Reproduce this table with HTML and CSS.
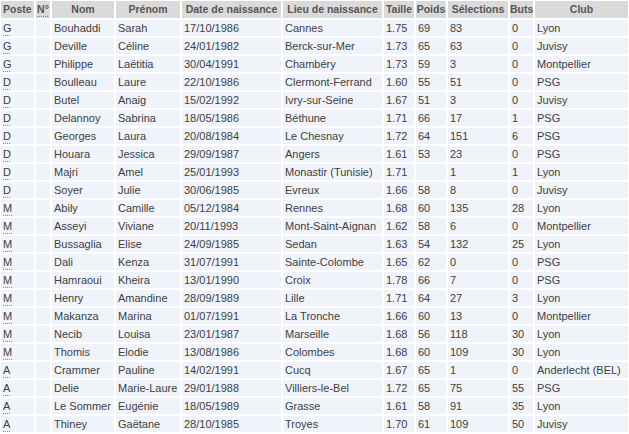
FILE: index.html
```html
<!DOCTYPE html>
<html lang="fr">
<head>
<meta charset="utf-8">
<title>Équipe de France</title>
<link rel="stylesheet" href="styles.css">
</head>
<body>
<table class="squad">
<colgroup>
<col class="c-poste"><col class="c-num"><col class="c-nom"><col class="c-prenom"><col class="c-date"><col class="c-lieu"><col class="c-taille"><col class="c-poids"><col class="c-sel"><col class="c-buts"><col class="c-club">
</colgroup>
<thead>
<tr><th>Poste</th><th><abbr title="Numéro">N°</abbr></th><th>Nom</th><th>Prénom</th><th>Date de naissance</th><th>Lieu de naissance</th><th>Taille</th><th>Poids</th><th>Sélections</th><th>Buts</th><th>Club</th></tr>
</thead>
<tbody>
<tr><td><abbr title="Gardienne">G</abbr></td><td></td><td>Bouhaddi</td><td>Sarah</td><td>17/10/1986</td><td>Cannes</td><td>1.75</td><td>69</td><td>83</td><td>0</td><td>Lyon</td></tr>
<tr><td><abbr title="Gardienne">G</abbr></td><td></td><td>Deville</td><td>Céline</td><td>24/01/1982</td><td>Berck-sur-Mer</td><td>1.73</td><td>65</td><td>63</td><td>0</td><td>Juvisy</td></tr>
<tr><td><abbr title="Gardienne">G</abbr></td><td></td><td>Philippe</td><td>Laëtitia</td><td>30/04/1991</td><td>Chambéry</td><td>1.73</td><td>59</td><td>3</td><td>0</td><td>Montpellier</td></tr>
<tr><td><abbr title="Défenseure">D</abbr></td><td></td><td>Boulleau</td><td>Laure</td><td>22/10/1986</td><td>Clermont-Ferrand</td><td>1.60</td><td>55</td><td>51</td><td>0</td><td>PSG</td></tr>
<tr><td><abbr title="Défenseure">D</abbr></td><td></td><td>Butel</td><td>Anaig</td><td>15/02/1992</td><td>Ivry-sur-Seine</td><td>1.67</td><td>51</td><td>3</td><td>0</td><td>Juvisy</td></tr>
<tr><td><abbr title="Défenseure">D</abbr></td><td></td><td>Delannoy</td><td>Sabrina</td><td>18/05/1986</td><td>Béthune</td><td>1.71</td><td>66</td><td>17</td><td>1</td><td>PSG</td></tr>
<tr><td><abbr title="Défenseure">D</abbr></td><td></td><td>Georges</td><td>Laura</td><td>20/08/1984</td><td>Le Chesnay</td><td>1.72</td><td>64</td><td>151</td><td>6</td><td>PSG</td></tr>
<tr><td><abbr title="Défenseure">D</abbr></td><td></td><td>Houara</td><td>Jessica</td><td>29/09/1987</td><td>Angers</td><td>1.61</td><td>53</td><td>23</td><td>0</td><td>PSG</td></tr>
<tr><td><abbr title="Défenseure">D</abbr></td><td></td><td>Majri</td><td>Amel</td><td>25/01/1993</td><td>Monastir (Tunisie)</td><td>1.71</td><td></td><td>1</td><td>1</td><td>Lyon</td></tr>
<tr><td><abbr title="Défenseure">D</abbr></td><td></td><td>Soyer</td><td>Julie</td><td>30/06/1985</td><td>Evreux</td><td>1.66</td><td>58</td><td>8</td><td>0</td><td>Juvisy</td></tr>
<tr><td><abbr title="Milieu">M</abbr></td><td></td><td>Abily</td><td>Camille</td><td>05/12/1984</td><td>Rennes</td><td>1.68</td><td>60</td><td>135</td><td>28</td><td>Lyon</td></tr>
<tr><td><abbr title="Milieu">M</abbr></td><td></td><td>Asseyi</td><td>Viviane</td><td>20/11/1993</td><td>Mont-Saint-Aignan</td><td>1.62</td><td>58</td><td>6</td><td>0</td><td>Montpellier</td></tr>
<tr><td><abbr title="Milieu">M</abbr></td><td></td><td>Bussaglia</td><td>Elise</td><td>24/09/1985</td><td>Sedan</td><td>1.63</td><td>54</td><td>132</td><td>25</td><td>Lyon</td></tr>
<tr><td><abbr title="Milieu">M</abbr></td><td></td><td>Dali</td><td>Kenza</td><td>31/07/1991</td><td>Sainte-Colombe</td><td>1.65</td><td>62</td><td>0</td><td>0</td><td>PSG</td></tr>
<tr><td><abbr title="Milieu">M</abbr></td><td></td><td>Hamraoui</td><td>Kheira</td><td>13/01/1990</td><td>Croix</td><td>1.78</td><td>66</td><td>7</td><td>0</td><td>PSG</td></tr>
<tr><td><abbr title="Milieu">M</abbr></td><td></td><td>Henry</td><td>Amandine</td><td>28/09/1989</td><td>Lille</td><td>1.71</td><td>64</td><td>27</td><td>3</td><td>Lyon</td></tr>
<tr><td><abbr title="Milieu">M</abbr></td><td></td><td>Makanza</td><td>Marina</td><td>01/07/1991</td><td>La Tronche</td><td>1.66</td><td>60</td><td>13</td><td>0</td><td>Montpellier</td></tr>
<tr><td><abbr title="Milieu">M</abbr></td><td></td><td>Necib</td><td>Louisa</td><td>23/01/1987</td><td>Marseille</td><td>1.68</td><td>56</td><td>118</td><td>30</td><td>Lyon</td></tr>
<tr><td><abbr title="Milieu">M</abbr></td><td></td><td>Thomis</td><td>Elodie</td><td>13/08/1986</td><td>Colombes</td><td>1.68</td><td>60</td><td>109</td><td>30</td><td>Lyon</td></tr>
<tr><td><abbr title="Attaquante">A</abbr></td><td></td><td>Crammer</td><td>Pauline</td><td>14/02/1991</td><td>Cucq</td><td>1.67</td><td>65</td><td>1</td><td>0</td><td>Anderlecht (BEL)</td></tr>
<tr><td><abbr title="Attaquante">A</abbr></td><td></td><td>Delie</td><td>Marie-Laure</td><td>29/01/1988</td><td>Villiers-le-Bel</td><td>1.72</td><td>65</td><td>75</td><td>55</td><td>PSG</td></tr>
<tr><td><abbr title="Attaquante">A</abbr></td><td></td><td>Le Sommer</td><td>Eugénie</td><td>18/05/1989</td><td>Grasse</td><td>1.61</td><td>58</td><td>91</td><td>35</td><td>Lyon</td></tr>
<tr><td><abbr title="Attaquante">A</abbr></td><td></td><td>Thiney</td><td>Gaëtane</td><td>28/10/1985</td><td>Troyes</td><td>1.70</td><td>61</td><td>109</td><td>50</td><td>Juvisy</td></tr>
</tbody>
</table>
</body>
</html>
```
FILE: styles.css
```css
html, body {
  margin: 0;
  padding: 0;
  background: #ffffff;
}
body {
  font-family: "Liberation Sans", Arial, sans-serif;
  font-size: 11px;
  color: #404040;
}
.squad {
  table-layout: fixed;
  border-collapse: separate;
  border-spacing: 2px;
  width: 631px;
  margin: -1px 0 0 -1px;
}
.c-poste { width: 33px; }
.c-num { width: 14px; }
.c-nom { width: 62px; }
.c-prenom { width: 64px; }
.c-date { width: 99px; }
.c-lieu { width: 99px; }
.c-taille { width: 30px; }
.c-poids { width: 30px; }
.c-sel { width: 60px; }
.c-buts { width: 23px; }
.c-club { width: 93px; }
.squad th,
.squad td {
  box-sizing: border-box;
  padding: 0 0 0 2px;
  white-space: nowrap;
  overflow: hidden;
  text-align: left;
  font-weight: normal;
}
.squad th {
  height: 17px;
  line-height: 17px;
  background: #dadada;
  color: #555555;
  font-size: 10.5px;
  font-weight: bold;
  text-align: center;
  padding: 0;
}
.squad th:first-child {
  text-align: left;
  padding-left: 2px;
}
.squad td {
  height: 16px;
  line-height: 16px;
  background: #f0f4fa;
}
.squad abbr {
  text-decoration: underline dotted #8a8a8a;
  text-underline-offset: 3px;
}
```
